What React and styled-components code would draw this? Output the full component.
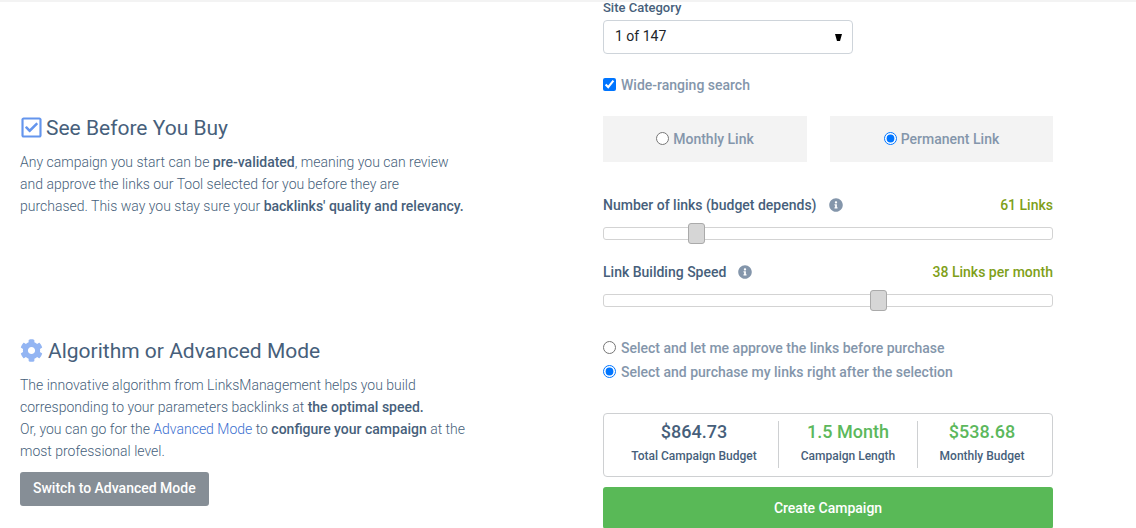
import React, { useState } from "react";
import styled, { createGlobalStyle } from "styled-components";
import { FaCog, FaInfoCircle, FaRegCheckSquare } from "react-icons/fa";

const GlobalStyle = createGlobalStyle`
  *, *::before, *::after { box-sizing: border-box; }
  body {
    margin: 0;
    background: #fff;
    color: #475f7b;
    font-family: Roboto, "Liberation Sans", sans-serif;
    font-size: 14px;
    line-height: 22px;
  }
  button, input, select { font-family: inherit; }
`;

const Page = styled.main`
  display: grid;
  grid-template-columns: minmax(0, 583fr) minmax(0, 450fr);
  padding: 0 83px 0 20px;
  border-top: 2px solid #f3f3f3;
`;

const Guide = styled.div`
  display: flex;
  flex-direction: column;
  gap: 120px;
  padding-top: 112px;
`;

const Topic = styled.section`
  display: flex;
  flex-direction: column;
  align-items: flex-start;
  max-width: 460px;
`;

const TopicTitle = styled.h2`
  display: flex;
  align-items: center;
  gap: ${(p) => p.$gap}px;
  margin: 0 0 9px;
  font-size: 21px;
  line-height: 28px;
  font-weight: 400;
`;

const TopicIcon = styled.span`
  display: flex;
  padding-bottom: 2px;
  color: ${(p) => p.$color};
`;

const TopicText = styled.p`
  margin: 0;
  font-weight: 300;
  strong { font-weight: 500; }
`;

const TextLink = styled.a`
  color: #3b6fd0;
  text-decoration: none;
`;

const ModeButton = styled.button`
  height: 34px;
  margin-top: 10px;
  padding: 0 13px 2px;
  border: 0;
  border-radius: 3px;
  background: #868e96;
  color: #fff;
  font-size: 14px;
  font-weight: 500;
`;

const Form = styled.form`
  display: flex;
  flex-direction: column;
`;

const FieldLabel = styled.label`
  margin-bottom: 6px;
  font-size: 13px;
  line-height: 12px;
  font-weight: 500;
`;

const SelectBox = styled.div`
  display: grid;
  align-items: center;
  width: 250px;
  max-width: 100%;
  & > * { grid-area: 1 / 1; }
`;

const Select = styled.select`
  appearance: none;
  width: 100%;
  height: 34px;
  padding: 0 11px 2px;
  border: 1px solid #ced4da;
  border-radius: 4px;
  background: #fff;
  color: #212529;
  font-size: 14px;
`;

const Caret = styled.svg`
  justify-self: end;
  margin-right: 11px;
  pointer-events: none;
`;

const Choice = styled.label`
  display: flex;
  align-items: center;
  gap: 5px;
  line-height: 24px;
  font-weight: 500;
  color: #8496ab;
  input { width: 13px; height: 13px; margin: 0 0 2px; accent-color: #0075ff; }
`;

const SearchChoice = styled(Choice)`
  margin: 19px 0;
`;

const LinkTypes = styled.div`
  display: grid;
  grid-template-columns: 204fr 223fr;
  gap: 23px;
  margin-bottom: 32px;
`;

const TypeChoice = styled(Choice)`
  justify-content: center;
  gap: 4px;
  height: 46px;
  background: #f3f3f3;
`;

const RangeField = styled.div`
  margin-bottom: 17px;
`;

const RangeHead = styled.div`
  display: flex;
  align-items: center;
  gap: 12px;
  font-weight: 500;
  svg { color: #8496ab; }
`;

const RangeValue = styled.output`
  margin-left: auto;
  color: #7f9f19;
`;

const Range = styled.input`
  appearance: none;
  display: block;
  width: 100%;
  height: 21px;
  margin: 7px 0 0;
  background: transparent;
  &::-webkit-slider-runnable-track {
    height: 13px;
    border: 1px solid #d3d3d3;
    border-radius: 3px;
    background: #fff;
  }
  &::-webkit-slider-thumb {
    appearance: none;
    width: 17px;
    height: 21px;
    margin-top: -5px;
    border: 1px solid #aaa;
    border-radius: 3px;
    background: #d6d6d6;
  }
`;

const Approval = styled.div`
  margin-top: 8px;
`;

const Summary = styled.dl`
  display: grid;
  grid-template-columns: 174fr 139fr 135fr;
  margin: 29px 0 10px;
  padding: 7px 0 8px;
  border: 1px solid #ced0d2;
  border-radius: 4px;
`;

const Stat = styled.div`
  display: flex;
  flex-direction: column-reverse;
  justify-content: flex-end;
  gap: 3px;
  height: 47px;
  text-align: center;
  & + & { border-left: 1px solid #ced0d2; }
  &:first-child { padding-left: 6px; }
  &:last-child { padding-right: 6px; }
`;

const StatName = styled.dt`
  font-size: 12px;
  line-height: 20px;
  font-weight: 500;
`;

const StatValue = styled.dd`
  margin: 0;
  font-size: 18px;
  line-height: 22px;
  font-weight: 500;
  color: ${(p) => (p.$green ? "#5cb85c" : "inherit")};
`;

const CreateButton = styled.button`
  height: 42px;
  border: 0;
  border-radius: 3px;
  background: #59b957;
  color: #fff;
  font-size: 14px;
  font-weight: 500;
`;

const stats = [
  { name: "Total Campaign Budget", value: "$864.73" },
  { name: "Campaign Length", value: "1.5 Month", green: true },
  { name: "Monthly Budget", value: "$538.68", green: true },
];

function RangeRow({ id, label, start, max, unit }) {
  const [value, setValue] = useState(start);
  return (
    <RangeField>
      <RangeHead>
        <label htmlFor={id}>{label}</label>
        <FaInfoCircle size={14} aria-hidden="true" />
        <RangeValue htmlFor={id}>{value} {unit}</RangeValue>
      </RangeHead>
      <Range id={id} type="range" min="1" max={max} value={value}
        onChange={(e) => setValue(e.target.value)} />
    </RangeField>
  );
}

export default function App() {
  return (
    <>
      <GlobalStyle />
      <Page>
        <Guide>
          <Topic>
            <TopicTitle $gap={3}>
              <TopicIcon $color="#6495ed"><FaRegCheckSquare size={23} /></TopicIcon>
              See Before You Buy
            </TopicTitle>
            <TopicText>
              Any campaign you start can be <strong>pre-validated</strong>, meaning you can review
              <br />
              and approve the links our Tool selected for you before they are
              <br />
              purchased. This way you stay sure your <strong>backlinks' quality and relevancy.</strong>
            </TopicText>
          </Topic>
          <Topic>
            <TopicTitle $gap={5}>
              <TopicIcon $color="#93b5f3"><FaCog size={23} /></TopicIcon>
              Algorithm or Advanced Mode
            </TopicTitle>
            <TopicText>
              The innovative algorithm from LinksManagement helps you build
              <br />
              corresponding to your parameters backlinks at <strong>the optimal speed.</strong>
              <br />
              Or, you can go for the <TextLink href="#advanced">Advanced Mode</TextLink> to{" "}
              <strong>configure your campaign</strong> at the
              <br />
              most professional level.
            </TopicText>
            <ModeButton type="button">Switch to Advanced Mode</ModeButton>
          </Topic>
        </Guide>
        <Form onSubmit={(e) => e.preventDefault()}>
          <FieldLabel htmlFor="category">Site Category</FieldLabel>
          <SelectBox>
            <Select id="category"><option>1 of 147</option></Select>
            <Caret width="7" height="7" viewBox="0 0 7 7" aria-hidden="true">
              <path d="M0 0h7L5 7H2z" />
            </Caret>
          </SelectBox>
          <SearchChoice>
            <input type="checkbox" defaultChecked />
            Wide-ranging search
          </SearchChoice>
          <LinkTypes>
            <TypeChoice><input type="radio" name="type" />Monthly Link</TypeChoice>
            <TypeChoice><input type="radio" name="type" defaultChecked />Permanent Link</TypeChoice>
          </LinkTypes>
          <RangeRow id="count" label="Number of links (budget depends)" start={61} max={310} unit="Links" />
          <RangeRow id="speed" label="Link Building Speed" start={38} max={61} unit="Links per month" />
          <Approval>
            <Choice><input type="radio" name="approval" />Select and let me approve the links before purchase</Choice>
            <Choice><input type="radio" name="approval" defaultChecked />Select and purchase my links right after the selection</Choice>
          </Approval>
          <Summary>
            {stats.map((s) => (
              <Stat key={s.name}>
                <StatName>{s.name}</StatName>
                <StatValue $green={s.green}>{s.value}</StatValue>
              </Stat>
            ))}
          </Summary>
          <CreateButton type="submit">Create Campaign</CreateButton>
        </Form>
      </Page>
    </>
  );
}
